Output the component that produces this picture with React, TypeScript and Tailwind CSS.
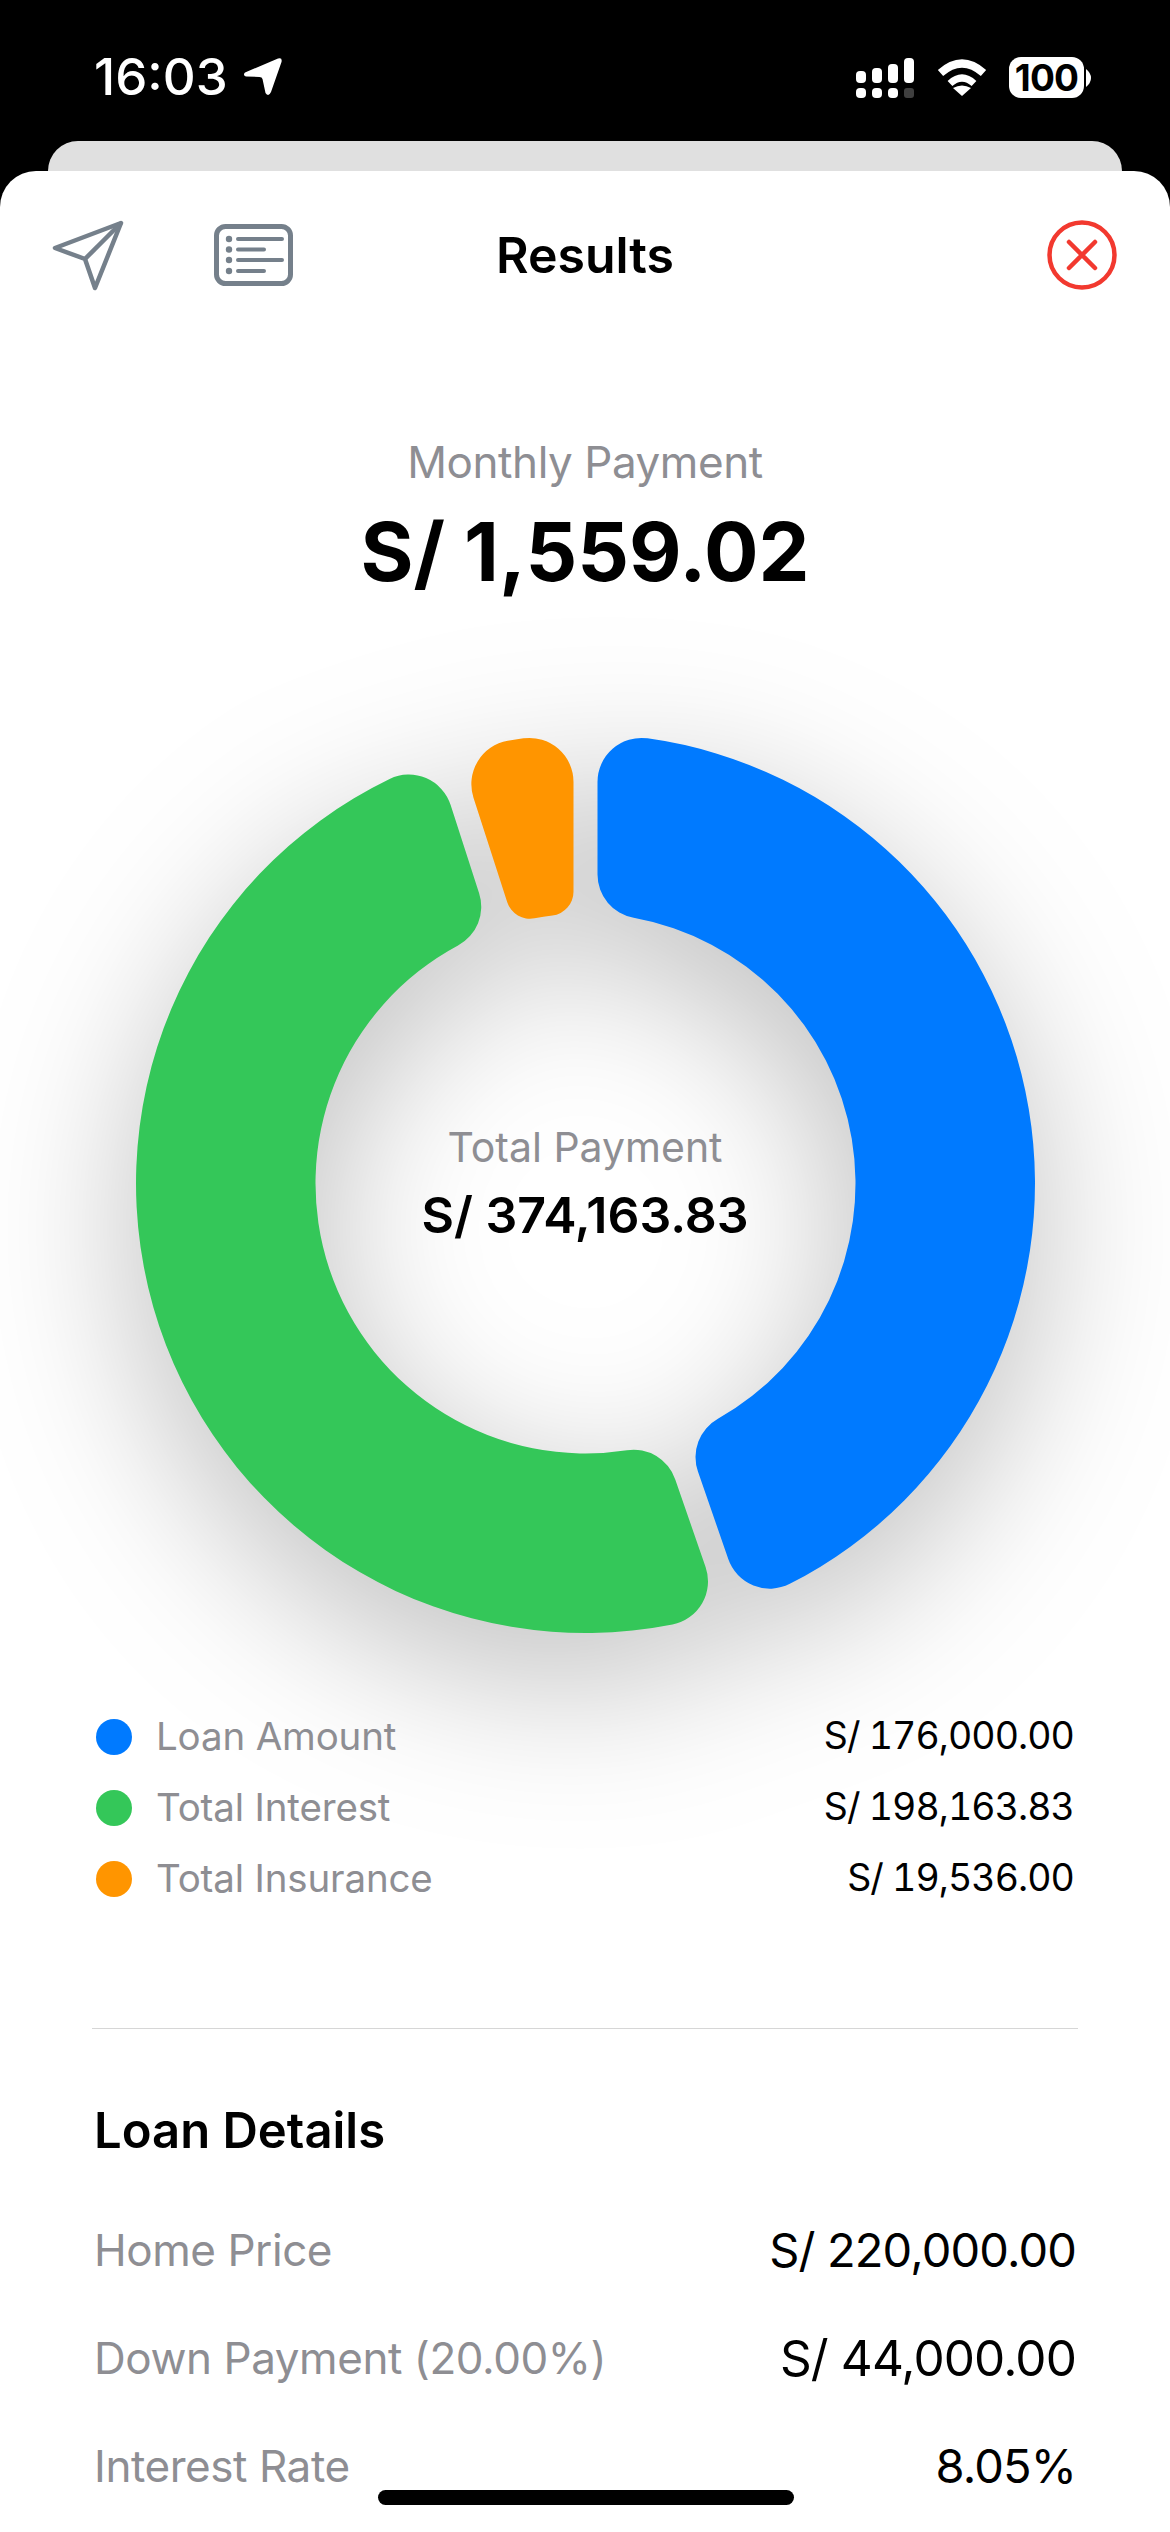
const R = 449.5, r = 270, g = 12;
const f = (n: number) => n.toFixed(2);
function seg(a0: number, a1: number, co: number, ci: number) {
  const rad = (d: number) => (d * Math.PI) / 180;
  const u = (a: number) => [Math.sin(rad(a)), -Math.cos(rad(a))];
  const n = (a: number) => [Math.cos(rad(a)), Math.sin(rad(a))];
  const pts = (a: number, side: number, c: number, rr: number, outer: boolean) => {
    const U = u(a), N = n(a);
    const dist = outer ? rr - c : rr + c;
    const t = Math.sqrt(dist * dist - (g + c) * (g + c));
    const C = [U[0] * t + side * N[0] * (g + c), U[1] * t + side * N[1] * (g + c)];
    const L = [U[0] * t + side * N[0] * g, U[1] * t + side * N[1] * g];
    const A = [(C[0] * rr) / dist, (C[1] * rr) / dist];
    return { L, A };
  };
  const os = pts(a0, 1, co, R, true), oe = pts(a1, -1, co, R, true);
  const is = pts(a0, 1, ci, r, false), ie = pts(a1, -1, ci, r, false);
  const P = (p: number[]) => `${f(p[0])} ${f(p[1])}`;
  return [
    `M${P(os.A)}`,
    `A${R} ${R} 0 0 1 ${P(oe.A)}`,
    `A${co} ${co} 0 0 1 ${P(oe.L)}`,
    `L${P(ie.L)}`,
    `A${ci} ${ci} 0 0 1 ${P(ie.A)}`,
    `A${r} ${r} 0 0 0 ${P(is.A)}`,
    `A${ci} ${ci} 0 0 1 ${P(is.L)}`,
    `L${P(os.L)}`,
    `A${co} ${co} 0 0 1 ${P(os.A)}`,
    "Z",
  ].join(" ");
}

function Legend({ color, label, value }: { color: string; label: string; value: string }) {
  return (
    <div className="flex h-[71px] items-center justify-between">
      <div className="flex items-center">
        <span className={`ml-[2px] h-[36px] w-[36px] rounded-full ${color}`} />
        <span className="ml-[24px] text-[38.5px] tracking-[-0.004em] text-[#8e8e93]">{label}</span>
      </div>
      <span className="mr-[2px] text-[37.5px] tracking-[-0.025em] text-black tabular-nums">{value}</span>
    </div>
  );
}

function Detail({ label, value, valueClass }: { label: string; value: string; valueClass: string }) {
  return (
    <div className="flex h-[108px] items-center justify-between">
      <span className="text-[44px] tracking-[-0.01em] text-[#8e8e93]">{label}</span>
      <span className={`tracking-[-0.018em] text-black ${valueClass}`}>{value}</span>
    </div>
  );
}

export default function App() {
  return (
    <div className="relative h-[2532px] w-[1170px] overflow-hidden bg-black font-['Inter',sans-serif]">
      <div className="flex h-[141px] items-start justify-between pl-[94px] pr-[79px] pt-[57px] text-white">
        <div className="flex h-[40px] items-center">
          <span className="text-[51px] font-medium leading-[40px]">16:03</span>
          <svg viewBox="0 0 40 40" className="ml-[15px] h-[40px] w-[40px]">
            <path
              d="M35 1.5 Q39.5 0 38.5 5 L28 35 Q25.5 40.5 22.5 36 L19.5 22 Q19 20 16.5 20 L3 19.5 Q-0.5 18 2 15.5 Z"
              fill="#fff"
            />
          </svg>
        </div>
        <div className="flex h-[41px] items-center">
          <svg viewBox="0 0 58 40" className="h-[40px] w-[58px]">
            <g fill="#fff">
              <rect x="0" y="13" width="10" height="12" rx="4" />
              <rect x="16" y="10" width="10" height="15" rx="4" />
              <rect x="32" y="6" width="10" height="19" rx="4" />
              <rect x="48" y="0" width="10" height="25" rx="4" />
              <rect x="0" y="30" width="10" height="10" rx="4" />
              <rect x="16" y="30" width="10" height="10" rx="4" />
              <rect x="32" y="30" width="10" height="10" rx="4" />
            </g>
            <rect x="48" y="30" width="10" height="10" rx="3" fill="#3f3f3f" />
          </svg>
          <svg viewBox="0 0 50 37" className="ml-[23px] h-[37px] w-[50px] fill-none stroke-white">
            <path d="M3.5 14 Q25 -5 46.5 14" strokeWidth="8" />
            <path d="M13 24.5 Q25 13.5 37 24.5" strokeWidth="7" />
            <path d="M25 37 L16 29 Q25 24 34 29 Z" fill="#fff" stroke="none" />
          </svg>
          <div className="ml-[22px] flex h-[41px] w-[75px] items-center justify-center rounded-[12px] bg-white text-[37px] font-bold leading-none tracking-[-0.02em] text-black">
            100
          </div>
          <svg viewBox="0 0 5 18" className="ml-[2px] h-[18px] w-[5px]">
            <path d="M0 0 Q5 4 5 9 Q5 14 0 18 Z" fill="#fff" />
          </svg>
        </div>
      </div>
      <div className="mx-[48px] h-[30px] rounded-t-[32px] bg-[#e0e0e0]" />
      <div className="h-[2361px] rounded-t-[36px] bg-white">
        <div className="grid h-[168px] grid-cols-3 items-center px-[50px]">
          <div className="flex items-center">
            <svg viewBox="0 0 76 72" className="h-[72px] w-[76px] fill-none stroke-[#75808b]" strokeWidth="4.5" strokeLinejoin="round">
              <path d="M71 4 L5 29 L35 40 L45 69 Z" />
              <path d="M71 4 L35 40" />
            </svg>
            <svg viewBox="0 0 83 66" className="ml-[86px] h-[66px] w-[83px] fill-none stroke-[#75808b]" strokeLinecap="round">
              <rect x="4.5" y="4.5" width="74" height="57" rx="9" strokeWidth="5" />
              <path d="M26 17 H70 M26 27.5 H52 M26 38 H70 M26 49 H52" strokeWidth="4" />
              <g fill="#75808b" stroke="none">
                <circle cx="17" cy="17" r="3.2" />
                <circle cx="17" cy="27.5" r="3.2" />
                <circle cx="17" cy="38" r="3.2" />
                <circle cx="17" cy="49" r="3.2" />
              </g>
            </svg>
          </div>
          <div className="text-center text-[50px] font-semibold text-black">Results</div>
          <div className="flex justify-end pr-[3px]">
            <svg viewBox="0 0 70 70" className="h-[70px] w-[70px] fill-none stroke-[#f2392f]" strokeWidth="4.5">
              <circle cx="35" cy="35" r="32.5" />
              <path d="M22 22 L48 48 M48 22 L22 48" strokeLinecap="round" />
            </svg>
          </div>
        </div>
        <div className="mt-[96px] text-center text-[44px] leading-[54px] tracking-[-0.01em] text-[#8e8e93]">Monthly Payment</div>
        <div className="mt-[14px] text-center text-[81px] font-bold leading-[98px] text-black">S/ 1,559.02</div>
        <div className="relative mx-auto mt-[133px] flex h-[899px] w-[899px] flex-col items-center justify-center">
          <svg viewBox="-449.5 -449.5 899 899" className="absolute inset-0 h-[899px] w-[899px] overflow-visible drop-shadow-[0_45px_80px_rgba(0,0,0,0.26)]">
            <path d={seg(0, 160.9, 44, 44)} fill="#007aff" />
            <path d={seg(160.9, 342.1, 44, 44)} fill="#34c759" />
            <path d={seg(342.1, 360, 44, 24)} fill="#ff9500" />
          </svg>
          <div className="relative -mt-[1px] text-[41px] leading-[48px] text-[#8e8e93]">Total Payment</div>
          <div className="relative mt-[15px] text-[50px] font-semibold leading-[58px] text-black">S/ 374,163.83</div>
        </div>
        <div className="relative px-[94px] pt-[68px]">
          <Legend color="bg-[#007aff]" label="Loan Amount" value="S/ 176,000.00" />
          <Legend color="bg-[#34c759]" label="Total Interest" value="S/ 198,163.83" />
          <Legend color="bg-[#ff9500]" label="Total Insurance" value="S/ 19,536.00" />
        </div>
        <div className="relative mx-[92px] mt-[114px] h-[1px] bg-[#d6d6d6]" />
        <div className="relative px-[94px]">
          <div className="mt-[72px] text-[49px] font-semibold leading-[60px] text-black">Loan Details</div>
          <div className="mt-[35px]">
            <Detail label="Home Price" value="S/ 220,000.00" valueClass="text-[47px]" />
            <Detail label="Down Payment (20.00%)" value="S/ 44,000.00" valueClass="text-[49.5px]" />
            <Detail label="Interest Rate" value="8.05%" valueClass="text-[47px]" />
          </div>
        </div>
      </div>
      <div className="absolute left-[378px] top-[2490px] h-[15px] w-[416px] rounded-full bg-black" />
    </div>
  );
}
